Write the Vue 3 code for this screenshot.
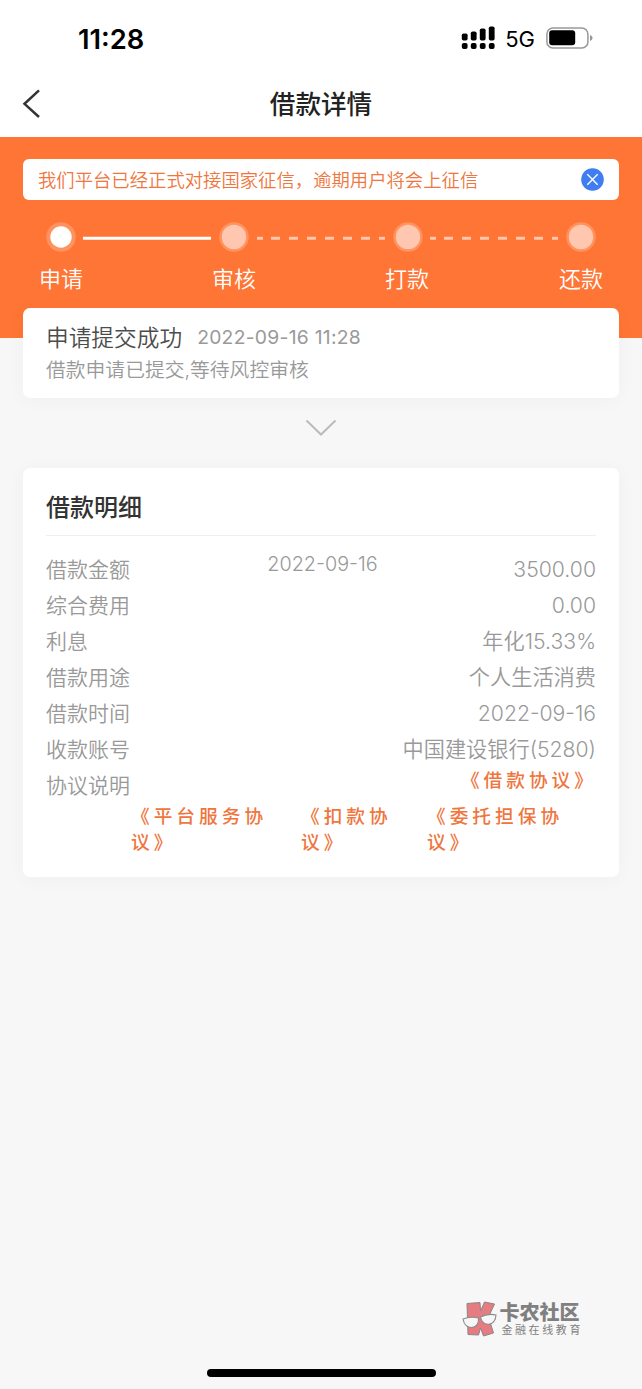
<script setup>
const steps = ['申请', '审核', '打款', '还款']
const rows = [
  { label: '借款金额', note: '2022-09-16', value: '3500.00' },
  { label: '综合费用', value: '0.00' },
  { label: '利息', value: '年化15.33%' },
  { label: '借款用途', value: '个人生活消费' },
  { label: '借款时间', value: '2022-09-16' },
  { label: '收款账号', value: '中国建设银行(5280)' },
]
const signal = [7, 9, 12, 14]
</script>

<template>
  <div class="screen">
    <div class="status">
      <span class="clock">11:28</span>
      <div class="status-right">
        <svg class="signal" width="34" height="24" viewBox="0 0 34 24">
          <template v-for="(h, i) in signal" :key="i">
            <rect :x="0.8 + i * 9" :y="14.5 - h" width="5.8" :height="h" rx="1.8" />
            <rect :x="0.8 + i * 9" y="17" width="5.8" height="6" rx="2" />
          </template>
        </svg>
        <span class="net">5G</span>
        <svg class="battery" width="48" height="22" viewBox="0 0 48 22">
          <rect x="0.9" y="0.9" width="41" height="20" rx="6" fill="none" stroke="#999" stroke-width="1.5" />
          <rect x="3.2" y="3.3" width="26" height="15" rx="3" />
          <path d="M44 8q2.6 1 2.6 3t-2.6 3z" fill="#999" />
        </svg>
      </div>
    </div>
    <header class="nav">
      <svg class="back" width="20" height="30" viewBox="0 0 20 30">
        <path d="M17 1.3 2.500 14.800 17 28" fill="none" stroke="#333" stroke-width="2.5" />
      </svg>
      <h1>借款详情</h1>
    </header>

    <section class="hero">
      <div class="notice">
        <span>我们平台已经正式对接国家征信，逾期用户将会上征信</span>
        <svg width="23" height="23" viewBox="0 0 23 23">
          <circle cx="11.5" cy="11.5" r="11.3" fill="#3f7df0" />
          <path d="M6.3 6.3 16.7 16.7M16.7 6.3 6.3 16.7" stroke="#fff" stroke-width="1.4" />
        </svg>
      </div>
      <div class="track">
        <template v-for="(s, i) in steps" :key="s">
          <svg v-if="i" class="link" width="128" height="4" viewBox="0 0 128 4">
            <path v-if="i === 1" d="M0 2.3H128" stroke="#fff" stroke-width="3" />
            <path v-else d="M0 2.3H6" stroke="#ffc7ae" stroke-width="3" />
            <path v-if="i > 1" d="M14 2.3H122" stroke="#ffc7ae" stroke-width="3" stroke-dasharray="9 9" />
            <path v-if="i > 1" d="M122 2.3H128" stroke="#ffc7ae" stroke-width="3" />
          </svg>
          <svg class="dot" width="30" height="30" viewBox="0 0 30 30">
            <circle cx="15" cy="15" r="14.7" fill="#ff935f" />
            <circle cx="15" cy="15" :r="i ? 12.2 : 10.7" :fill="i ? '#ffc7b0' : '#fff'" />
          </svg>
        </template>
      </div>
      <div class="labels">
        <span v-for="s in steps" :key="s">{{ s }}</span>
      </div>
    </section>

    <section class="card progress">
      <div class="progress-head">
        <span class="title">申请提交成功</span>
        <span class="time">2022-09-16 11:28</span>
      </div>
      <p>借款申请已提交,等待风控审核</p>
    </section>
    <svg class="chevron" width="32" height="18" viewBox="0 0 32 18">
      <path d="M1.5 1.5 16 15.5 30.5 1.5" fill="none" stroke="#bbb" stroke-width="2" />
    </svg>

    <section class="card details">
      <h2>借款明细</h2>
      <div class="rows">
        <div v-for="r in rows" :key="r.label" class="row">
          <span class="key">{{ r.label }}</span>
          <span class="note">{{ r.note }}</span>
          <span class="value">{{ r.value }}</span>
        </div>
        <div class="row">
          <span class="key">协议说明</span>
          <span></span>
          <a class="agreement single">《借款协议》</a>
        </div>
      </div>
      <div class="agreements">
        <a class="agreement">《平台服务协<br />议》</a>
        <a class="agreement">《扣款协<br />议》</a>
        <a class="agreement">《委托担保协<br />议》</a>
      </div>
    </section>

    <footer class="footer">
      <div class="brand">
        <svg width="35" height="37" viewBox="0 0 35 37">
          <path
            d="M5 2.500 18 1.500 18.500 10 22.500 1 32.500 3 26.500 16 31.500 32 21.500 35 18.500 27 16.500 34 6 33.500z"
            fill="#e47c82" stroke="#8e8585" stroke-width="1"
          />
          <g fill="#f7f7f7" stroke="#8b8b8b" stroke-width="1.1">
            <path d="M1 18Q8 15 16.500 17 17 25.500 10 26.500 2.500 26.500 1 18z" />
            <path d="M18.500 16Q26 12 34 14 33.500 22 27 23.300 20 23.500 18.500 16z" />
          </g>
        </svg>
        <div class="brand-text">
          <b>卡农社区</b>
          <small>金融在线教育</small>
        </div>
      </div>
      <div class="home"></div>
    </footer>
  </div>
</template>

<style>
body {
  background: #f7f7f7;
}
</style>

<style scoped>
.screen {
  box-sizing: border-box;
  width: 642px;
  height: 1389px;
  display: flex;
  flex-direction: column;
  background: #f7f7f7;
  font-family: Inter, "Noto Sans CJK SC", sans-serif;
  font-weight: 350;
  overflow: hidden;
  white-space: nowrap;
}
.status {
  flex: none;
  height: 76px;
  box-sizing: border-box;
  padding: 0 48px 0 78px;
  background: #fff;
  display: flex;
  align-items: center;
  justify-content: space-between;
}
.clock {
  font-size: 27.3px;
  font-weight: 600;
  line-height: 30px;
  padding-top: 4px;
}
.status-right {
  display: flex;
  align-items: center;
}
.net {
  font-size: 22px;
  font-weight: 400;
  line-height: 24px;
  padding-top: 2px;
  margin: 0 11px 0 10px;
}
.nav {
  flex: none;
  height: 61px;
  background: #fff;
  display: grid;
  grid-template-columns: 60px 1fr 60px;
  align-items: start;
}
.back {
  margin: 13px 0 0 22px;
}
h1 {
  margin: 0;
  padding-top: 10px;
  text-align: center;
  font-size: 25.6px;
  line-height: 38px;
  font-weight: 500;
  color: #222;
}
.hero {
  flex: none;
  height: 201px;
  box-sizing: border-box;
  padding: 22px 23px 0;
  background: #ff7536;
}
.notice {
  height: 41px;
  box-sizing: border-box;
  padding: 0 15px;
  border-radius: 6px;
  background: #fff;
  color: #ef763e;
  font-size: 18.35px;
  display: flex;
  align-items: center;
  justify-content: space-between;
}
.notice span {
  margin-top: -1px;
}
.track {
  display: flex;
  align-items: center;
  justify-content: space-between;
  margin: 22px 23px 0 22.5px;
}
.link {
  margin-top: 2px;
}
.labels {
  display: flex;
  justify-content: space-between;
  padding: 0 16px;
  margin-top: 10px;
  color: #fff;
  font-size: 22px;
  line-height: 34px;
}
.labels span:nth-child(2),
.labels span:nth-child(3) {
  margin-left: -1px;
}
.card {
  flex: none;
  margin: 0 23px;
  box-sizing: border-box;
  background: #fff;
  border-radius: 7px;
  box-shadow: 0 2px 20px rgba(0, 0, 0, 0.035);
}
.progress {
  height: 90px;
  margin-top: -30px;
  padding: 12px 23px 0;
}
.progress-head {
  display: flex;
  align-items: center;
  height: 34px;
}
.title {
  font-size: 22.7px;
  color: #4c4c4c;
  margin-top: -1px;
}
.time {
  font-size: 19.3px;
  letter-spacing: 0.28px;
  color: #999;
  margin-left: 15px;
  font-weight: 400;
}
.progress p {
  margin: 1px 0 0;
  font-size: 19.8px;
  line-height: 30px;
  color: #999;
}
.chevron {
  flex: none;
  align-self: center;
  margin: 21px 0 31px;
}
.details {
  height: 409px;
  padding: 0 23px;
}
h2 {
  margin: 0;
  height: 63px;
  padding-top: 4px;
  line-height: 71px;
  border-bottom: 1px solid #efefef;
  font-size: 24px;
  font-weight: 500;
  color: #333;
}
.rows {
  padding-top: 16px;
}
.row {
  height: 36px;
  display: grid;
  grid-template-columns: 1fr auto 1fr;
  align-items: center;
  font-size: 21px;
  line-height: 36px;
  color: #999;
}
.note {
  font-size: 19.8px;
  margin: -12px 0 0 3px;
}
.value,
.single {
  justify-self: end;
}
.value {
  font-size: 21.2px;
  margin-top: -2px;
}
.agreement {
  font-size: 18.7px;
  line-height: 25.5px;
  letter-spacing: 4px;
  font-weight: 500;
  color: #ef763e;
}
.single {
  margin: -10px -1px 0 0;
}
.agreements {
  display: flex;
  padding-left: 85px;
}
.agreements a:nth-child(1) {
  width: 170px;
}
.agreements a:nth-child(2) {
  width: 126px;
}
.footer {
  margin-top: auto;
  height: 76px;
  display: flex;
  flex-direction: column;
  align-items: center;
  justify-content: space-between;
  padding-bottom: 12px;
}
.brand {
  align-self: flex-end;
  display: flex;
  margin-right: 59px;
  gap: 2px;
  color: #808080;
}
.brand-text {
  display: flex;
  flex-direction: column;
  padding-top: 1px;
}
.brand b {
  font-size: 20px;
  line-height: 22px;
  font-weight: 900;
}
.brand small {
  font-size: 11px;
  line-height: 12px;
  letter-spacing: 2.6px;
  padding-left: 2px;
  font-weight: 400;
}
.home {
  width: 229px;
  height: 8px;
  border-radius: 4px;
  background: #000;
}
</style>
